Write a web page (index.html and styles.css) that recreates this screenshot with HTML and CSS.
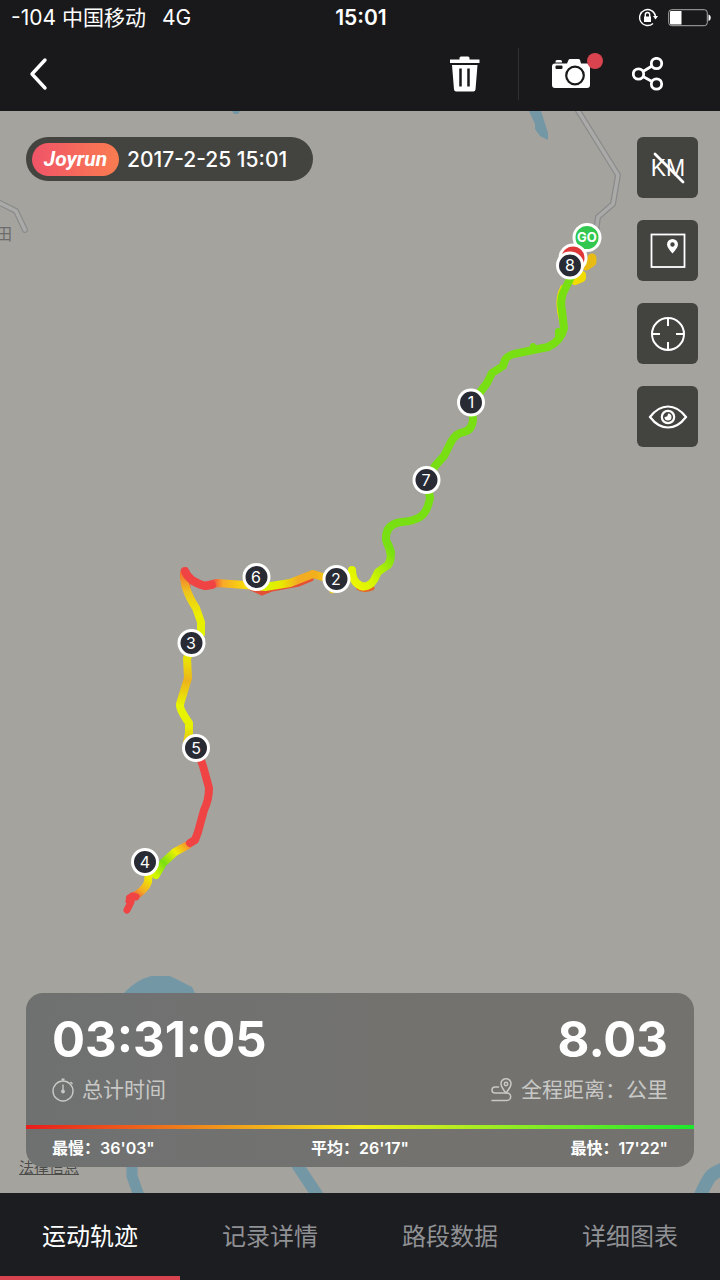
FILE: index.html
```html
<!DOCTYPE html>
<html lang="zh-CN">
<head>
<meta charset="utf-8">
<meta name="viewport" content="width=device-width, initial-scale=1">
<title>运动轨迹</title>
<link rel="stylesheet" href="styles.css">
</head>
<body>
<div class="app">
  <header class="top">
    <div class="status">
      <div class="carrier"><span>-104 中国移动</span><span>4G</span></div>
      <time class="clock">15:01</time>
      <div class="indicators">
        <svg width="20" height="20" viewBox="0 0 20 20" fill="none" stroke="#fff" stroke-width="1.4" aria-hidden="true">
          <path d="M17.5 8A8 8 0 1 0 15 15.500"/>
          <path d="M15 8h5l-2.500 3.500z" fill="#fff" stroke="none"/>
          <rect x="6" y="8.500" width="7" height="5.500" fill="#fff" stroke="none"/>
          <path d="M7.300 9V6.700a2.200 2.200 0 0 1 4.400 0V9"/>
        </svg>
        <svg width="43" height="18" viewBox="0 0 43 18" aria-hidden="true">
          <rect x=".7" y=".7" width="38.600" height="16" rx="3" fill="none" stroke="#aaa"/>
          <path d="M3 2h10.500v13.500H3a1 1 0 0 1-1-1V3a1 1 0 0 1 1-1z" fill="#fff"/>
          <path d="M40.500 5.500c3 1 3 5.500 0 6.500z" fill="#fff"/>
        </svg>
      </div>
    </div>
    <nav class="bar">
      <button class="icon" type="button" aria-label="返回">
        <svg width="20" height="34" viewBox="0 0 20 34" fill="none" stroke="#fff" stroke-width="3.400" stroke-linecap="round" stroke-linejoin="round"><path d="M17 3 4 17l13 14"/></svg>
      </button>
      <div class="tools">
        <button class="icon trash" type="button" aria-label="删除">
          <svg width="30" height="36" viewBox="0 0 30 36">
            <path fill="#fff" d="M0 3.500h9.500V2q0-1.500 1.500-1.500h7q1.500 0 1.500 1.500v1.500H29.500V7H0zM2 9h25.500l-2 24.500q-.2 2-2.200 2H6.200q-2 0-2.200-2z"/>
            <path stroke="#19191b" stroke-width="2.500" d="M10.500 12.500V30.500M18.500 12.500V30.500"/>
          </svg>
        </button>
        <button class="icon camera" type="button" aria-label="相机">
          <svg width="40" height="34" viewBox="0 0 40 34">
            <path fill="#fff" d="M4.500 4.500q0-1.500 1.500-1.500h3.500q1.500 0 1.500 1.500v1H4.500zM4 6.500h12l1.500-3.500q.5-1 1.500-1h8.500q1 0 1.500 1L30 6.500h6q3 0 3 3v18.500q0 3-3 3H4q-3 0-3-3V9.500q0-3 3-3z"/>
            <rect x="4.500" y="8.500" width="7" height="3.500" rx="1" fill="#19191b"/>
            <circle cx="24" cy="18.500" r="8.800" fill="#fff" stroke="#19191b" stroke-width="2.200"/>
          </svg>
          <span class="dot"></span>
        </button>
        <button class="icon share" type="button" aria-label="分享">
          <svg width="32" height="34" viewBox="0 0 32 34" fill="none" stroke="#fff" stroke-width="2.800">
            <circle cx="6.500" cy="17" r="5.200"/><circle cx="24.500" cy="6.500" r="5.200"/><circle cx="24.500" cy="27" r="5.200"/>
            <path d="M11 14.500 20 9M11 19.500 20 24.500"/>
          </svg>
        </button>
      </div>
    </nav>
  </header>

  <main class="stage">
    <svg class="map" viewBox="0 111 720 1082" preserveAspectRatio="xMidYMid slice" role="img" aria-label="路线地图">
      <defs>
        <linearGradient id="north" gradientUnits="userSpaceOnUse" x1="391" y1="550" x2="352" y2="585"><stop offset="0" stop-color="#78e012"/><stop offset=".65" stop-color="#d4f500"/><stop offset="1" stop-color="#eff600"/></linearGradient>
        <linearGradient id="west" gradientUnits="userSpaceOnUse" x1="185" y1="0" x2="336" y2="0"><stop offset="0" stop-color="#f04444"/><stop offset=".18" stop-color="#f04444"/><stop offset=".25" stop-color="#f7a928"/><stop offset=".4" stop-color="#f8dc08"/><stop offset=".54" stop-color="#d9f500"/><stop offset=".64" stop-color="#e8e800"/><stop offset=".75" stop-color="#f3ab24"/><stop offset=".87" stop-color="#f2b01c"/><stop offset="1" stop-color="#f4e600"/></linearGradient>
        <linearGradient id="south" gradientUnits="userSpaceOnUse" x1="0" y1="571" x2="0" y2="748"><stop offset="0" stop-color="#f06b36"/><stop offset=".12" stop-color="#efc51c"/><stop offset=".25" stop-color="#ecee00"/><stop offset=".4" stop-color="#dcf600"/><stop offset=".52" stop-color="#eadc08"/><stop offset=".62" stop-color="#edb31c"/><stop offset=".76" stop-color="#e8f600"/><stop offset=".88" stop-color="#e6f000"/><stop offset="1" stop-color="#edb31c"/></linearGradient>
        <linearGradient id="tail" gradientUnits="userSpaceOnUse" x1="192" y1="840" x2="155" y2="874"><stop offset="0" stop-color="#f04444"/><stop offset=".15" stop-color="#f5982c"/><stop offset=".4" stop-color="#eef000"/><stop offset=".72" stop-color="#78e012"/><stop offset="1" stop-color="#d2f500"/></linearGradient>
        <linearGradient id="end" gradientUnits="userSpaceOnUse" x1="149" y1="876" x2="133" y2="898"><stop offset="0" stop-color="#eef000"/><stop offset=".6" stop-color="#f3ab24"/><stop offset="1" stop-color="#f04444"/></linearGradient>
      </defs>
      <rect y="111" width="720" height="1082" fill="#a4a39e"/>
      <g fill="#7397a5">
        <path d="M529 111h12l7 22v7l-8-4-5-7v-5zM232 111h8l-2 3h-4zM124 993q12-13 27-17h19l22 11 3 6v60H124z"/>
      </g>
      <g fill="none" stroke="#7397a5">
        <path d="M132 1160v16l7 20" stroke-width="11"/>
        <path d="M294 1160l24 36" stroke-width="12"/>
        <path d="M698 1201q6-15 12-24 5-6 20-10" stroke-width="13"/>
      </g>
      <g fill="none" stroke-linejoin="round">
        <g stroke="#8b8b8c" stroke-width="6"><path d="M577 109l41 66-5 29-15 13-3 22"/><path d="M-2 202l18 9 9 19" stroke-linecap="round"/></g>
        <g stroke="#aaaaa9" stroke-width="3.500"><path d="M577 109l41 66-5 29-15 13-3 22"/><path d="M-2 202l18 9 9 19" stroke-linecap="round"/></g>
      </g>
      <text class="place" x="-4" y="240">田</text>
      <g fill="none" stroke-width="8" stroke-linecap="round" stroke-linejoin="round">
        <path d="M592 258v4l-6 4" stroke="#e8bc14" stroke-width="9"/>
        <path d="M582 275v3l-7 3" stroke="#f2dc00" stroke-width="8"/>
        <path d="M563 288q-5 9-3 23l3 14" stroke="#e8e000" stroke-width="6"/>
        <path d="M573 273L563 293Q560 301 562 311L564 328Q561 341 548 347L533 350L514 354Q507 356 505 360L503 366L492 373L487 383L472 403L473 420Q472 430 464 432Q456 433 451 442L444 456L435 466L427 480L430 498Q427 513 420 517Q414 521 402 522Q385 524 386 540Q389 546 391 552" stroke="#78e012"/>
        <path d="M558 331v5M533 346v3" stroke="#78e012" stroke-width="6"/>
        <path d="M359 588q6 3 13 0" stroke="#e56526" stroke-width="5"/>
        <path d="M387 543Q394 557 388 565L378 572L374 580Q369 588 361 586Q352 582 352 570" stroke="url(#north)"/>
        <path d="M332 588v3" stroke="#e8cb14" stroke-width="5"/>
        <path d="M251 588l11 5 10-4 27-5 12-5" stroke="#e45035" stroke-width="5"/>
        <path d="M185 571q3 10 20 15l12-3 28 2 20 2 25-4 23-9 13 4 10 1" stroke="url(#west)"/>
        <path d="M185 571v7q1 4 2 8" stroke="#ed6334" stroke-width="7"/>
        <path d="M184 573q-1 15 12 35l5 14v12l-14 24 1 20-8 26q-1 5 9 19v10l-2 10 9 10" stroke="url(#south)"/>
        <path d="M185 571q3 10 20 15l7-1" stroke="#f04444"/>
        <path d="M188 845l-13 7-12 11-7 12" stroke="url(#tail)"/>
        <path d="M198 752l5 14 6 22q0 12-5 22l-6 22-3 8-5 3" stroke="#f04444"/>
        <path d="M149 870l-1 12q-2 6-10 12l-8 4" stroke="url(#end)"/>
        <path d="M136 897l-4-1-3 5 2 1-4 8" stroke="#f04444" stroke-width="7"/>
      </g>
      <g class="pins">
        <g stroke="#fff" stroke-width="3">
          <circle cx="587" cy="237.500" r="13" fill="#32c850"/>
          <circle cx="573" cy="258" r="13" fill="#e03838"/>
          <g fill="#282b34">
            <circle cx="570" cy="265.500" r="12.500"/><circle cx="471" cy="402.500" r="12.500"/><circle cx="426.500" cy="480" r="12.500"/>
            <circle cx="336.500" cy="579" r="12.500"/><circle cx="256.500" cy="577" r="12.500"/><circle cx="191.500" cy="643" r="12.500"/>
            <circle cx="196" cy="748" r="12.500"/><circle cx="145" cy="862" r="12.500"/>
          </g>
        </g>
        <text class="go" x="587" y="242">GO</text>
        <text x="570" y="271">8</text><text x="471" y="408">1</text><text x="426" y="486">7</text><text x="336" y="585">2</text>
        <text x="256" y="583">6</text><text x="191" y="649">3</text><text x="196" y="754">5</text><text x="145" y="868">4</text>
      </g>
    </svg>
    <a class="legal" href="#legal">法律信息</a>
    <div class="overlay">
      <div class="upper">
        <div class="stamp"><span class="brand">Joyrun</span><time>2017-2-25 15:01</time></div>
        <div class="controls">
          <button type="button" aria-label="隐藏公里标记">
            <svg width="40" height="36" viewBox="0 0 40 36"><text class="km" x="20" y="26">KM</text><path d="M7 4l28 28" stroke="#fff" stroke-width="2.800" stroke-linecap="round"/></svg>
          </button>
          <button type="button" aria-label="地图">
            <svg width="36" height="36" viewBox="0 0 36 36"><rect x="1.500" y="1.500" width="33" height="32.500" fill="none" stroke="#fff" stroke-width="1.800"/><path fill="#fff" fill-rule="evenodd" d="M22.500 20.500Q17 14.500 17 11.500a5.500 5.500 0 0 1 11 0Q28 14.500 22.500 20.500zm0-11.200a2.200 2.200 0 1 0 0 4.400 2.200 2.200 0 0 0 0-4.400z"/></svg>
          </button>
          <button type="button" aria-label="定位">
            <svg width="36" height="36" viewBox="0 0 36 36" fill="none" stroke="#fff" stroke-width="2"><circle cx="18" cy="18" r="16"/><path d="M18 2v8M18 26v8M2 18h8M26 18h8"/></svg>
          </button>
          <button type="button" aria-label="显示">
            <svg width="40" height="26" viewBox="0 0 40 26" fill="none" stroke="#fff" stroke-width="2.200"><path d="M2 13Q10 2.500 20 2.500T38 13Q30 23.500 20 23.500T2 13z"/><circle cx="20" cy="13" r="6.200"/><path d="M20 9.500a3.500 3.500 0 1 1-3.500 3.500q3.500 0 3.500-3.500z" fill="#fff" stroke="none"/></svg>
          </button>
        </div>
      </div>
      <section class="panel">
        <div class="totals">
          <div class="total">
            <strong>03:31:05</strong>
            <span class="label">
              <svg width="22" height="24" viewBox="0 0 22 24" fill="none" stroke="currentColor" stroke-width="1.400"><circle cx="11" cy="13" r="10"/><path d="M11 6.500v6M9.500 1.200h3M11 1v2M18.500 4l2 2"/><circle cx="11" cy="13.500" r="1.200" fill="currentColor"/></svg>
              总计时间
            </span>
          </div>
          <div class="total right">
            <strong>8.03</strong>
            <span class="label">
              <svg width="22" height="24" viewBox="0 0 22 24" fill="none" stroke="currentColor" stroke-width="1.500" stroke-linecap="round"><path d="M15 15q-5-6-5-9.500a5 4.800 0 0 1 10 0Q20 9 15 15z"/><circle cx="15" cy="6" r="1.700"/><path d="M7.500 9H4a2.800 2.800 0 0 0 0 6h12a3.700 3.700 0 0 1 0 7.400H1"/></svg>
              全程距离：公里
            </span>
          </div>
        </div>
        <div class="scale"></div>
        <div class="paces"><span>最慢：36'03"</span><span>平均：26'17"</span><span>最快：17'22"</span></div>
      </section>
    </div>
  </main>

  <nav class="tabs">
    <a class="active" href="#track" aria-current="page">运动轨迹</a>
    <a href="#detail">记录详情</a>
    <a href="#segments">路段数据</a>
    <a href="#charts">详细图表</a>
  </nav>
</div>
</body>
</html>
```
FILE: styles.css
```css
* { box-sizing: border-box; }
body {
  margin: 0;
  background: #1c1d21;
  color: #fff;
  font-family: Inter, "Noto Sans CJK SC", sans-serif;
}
svg { display: block; flex: none; }
button { padding: 0; border: 0; background: none; color: inherit; cursor: pointer; }
.app { display: flex; flex-direction: column; min-height: 100vh; }

.top { background: #19191b; }
.status {
  display: grid;
  grid-template-columns: 1fr auto 1fr;
  align-items: center;
  height: 36px;
  padding: 0 9px 0 11px;
  font-size: 21px;
  line-height: 34px;
}
.carrier { display: flex; align-items: baseline; gap: 16px; }
.clock { font-weight: 600; }
.indicators { display: flex; align-items: center; justify-content: flex-end; gap: 10px; }
.bar {
  display: flex;
  align-items: center;
  justify-content: space-between;
  height: 75px;
  padding: 0 56px 0 28px;
}
.icon { position: relative; display: flex; }
.tools { display: flex; align-items: center; }
.trash { height: 52px; align-items: center; padding-right: 38px; border-right: 1px solid #303033; }
.camera { margin-left: 32px; }
.share { margin-left: 41px; }
.dot {
  position: absolute;
  top: -4px;
  right: -12px;
  width: 16px;
  height: 16px;
  border-radius: 50%;
  background: #d94350;
}

.stage { flex: 1; display: grid; overflow: hidden; }
.map, .overlay, .legal { grid-area: 1 / 1; }
.map { width: 100%; height: 100%; }
.place { font-size: 16px; fill: #6c6c6c; }
.pins text { font-size: 16px; fill: #fff; text-anchor: middle; }
.pins .go { font-size: 13px; font-weight: 700; }
.legal {
  align-self: end;
  justify-self: start;
  margin: 0 0 14px 19px;
  color: #4c4c4b;
  font-size: 15px;
  line-height: 22px;
}
.overlay {
  position: relative;
  display: flex;
  flex-direction: column;
  justify-content: space-between;
  padding: 26px;
}
.upper { display: flex; justify-content: space-between; align-items: flex-start; }
.stamp {
  display: flex;
  align-items: center;
  gap: 8px;
  height: 44px;
  padding: 0 26px 0 6px;
  border-radius: 22px;
  background: #434340;
  font-size: 21px;
  font-weight: 500;
}
.brand {
  width: 87px;
  border-radius: 17px;
  background: linear-gradient(90deg, #f05468, #fa7c50);
  font: italic 700 21px/33px Roboto, sans-serif;
  text-align: center;
}
.controls { display: grid; gap: 22px; margin-right: -4px; }
.controls button {
  display: grid;
  place-items: center;
  width: 61px;
  height: 61px;
  border-radius: 6px;
  background: #434340;
}
.km { font-size: 23px; font-weight: 500; fill: #fff; text-anchor: middle; }

.panel {
  border-radius: 17px;
  overflow: hidden;
  background: linear-gradient(90deg, #6f7171, #73726f 60%);
}
.totals { display: flex; justify-content: space-between; padding: 16px 26px 21px; }
.total { display: flex; flex-direction: column; gap: 5px; }
.right { align-items: flex-end; }
.total strong { font-size: 49px; line-height: 62px; }
.label {
  display: flex;
  align-items: center;
  gap: 8px;
  color: #c8c8c6;
  font-size: 21px;
  line-height: 28px;
}
.scale { height: 4px; background: linear-gradient(90deg, #e91c1c, #f4ee1c 50%, #1ce82c); }
.paces {
  display: grid;
  grid-template-columns: 1fr auto 1fr;
  padding: 7px 26px;
  font-size: 16px;
  font-weight: 600;
  line-height: 24px;
}
.paces span:last-child { text-align: right; }

.tabs { display: grid; grid-template-columns: repeat(4, 1fr); height: 87px; background: #1c1d21; }
.tabs a {
  display: grid;
  place-items: center;
  border-bottom: 4px solid transparent;
  color: #909194;
  font-size: 24px;
  text-decoration: none;
}
.tabs .active { border-color: #d94350; color: #fff; }
```
